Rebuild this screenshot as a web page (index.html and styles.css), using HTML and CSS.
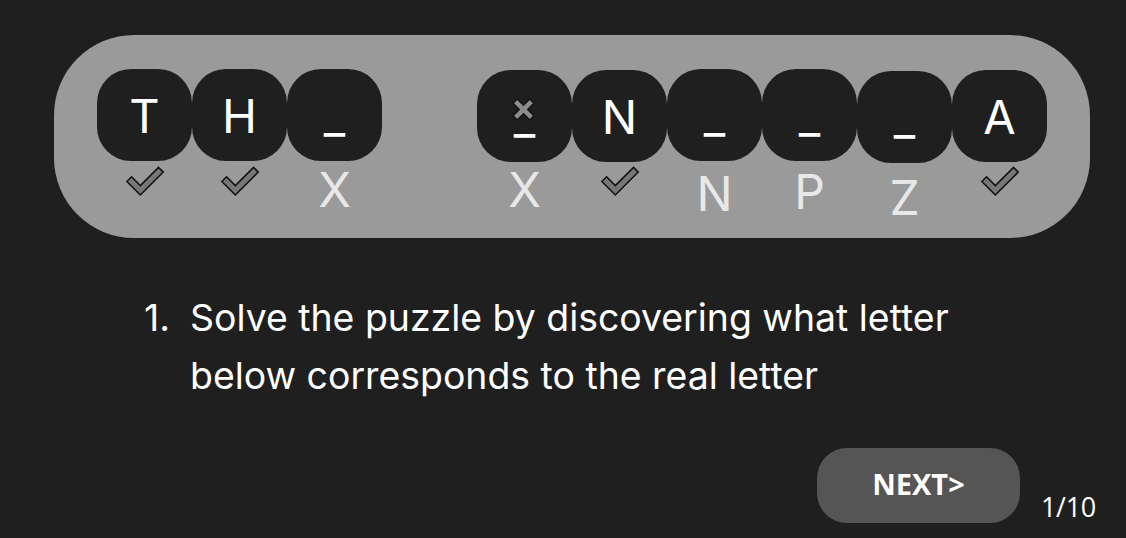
FILE: index.html
```html
<!DOCTYPE html>
<html lang="en">
<head>
<meta charset="utf-8">
<title>Puzzle</title>
<link rel="stylesheet" href="styles.css">
</head>
<body>
<main class="page">
  <section class="board">
    <div class="slot">
      <div class="tile">T</div>
      <div class="hint"><svg class="check" viewBox="-26 8 42 32"><path transform="rotate(45)" d="M0,27 L13,27 L13,0 L20,0 L20,34 L0,34 Z"/></svg></div>
    </div>
    <div class="slot">
      <div class="tile">H</div>
      <div class="hint"><svg class="check" viewBox="-26 8 42 32"><path transform="rotate(45)" d="M0,27 L13,27 L13,0 L20,0 L20,34 L0,34 Z"/></svg></div>
    </div>
    <div class="slot">
      <div class="tile">_</div>
      <div class="hint">X</div>
    </div>
    <div class="slot space"></div>
    <div class="slot">
      <div class="tile low">_<svg class="wrong" viewBox="0 0 24 24"><path d="M2,6 L6,2 L12,8 L18,2 L22,6 L16,12 L22,18 L18,22 L12,16 L6,22 L2,18 L8,12 Z"/></svg></div>
      <div class="hint">X</div>
    </div>
    <div class="slot">
      <div class="tile low">N</div>
      <div class="hint"><svg class="check" viewBox="-26 8 42 32"><path transform="rotate(45)" d="M0,27 L13,27 L13,0 L20,0 L20,34 L0,34 Z"/></svg></div>
    </div>
    <div class="slot">
      <div class="tile">_</div>
      <div class="hint down4">N</div>
    </div>
    <div class="slot">
      <div class="tile">_</div>
      <div class="hint down2">P</div>
    </div>
    <div class="slot">
      <div class="tile lower">_</div>
      <div class="hint down8">Z</div>
    </div>
    <div class="slot">
      <div class="tile low">A</div>
      <div class="hint"><svg class="check" viewBox="-26 8 42 32"><path transform="rotate(45)" d="M0,27 L13,27 L13,0 L20,0 L20,34 L0,34 Z"/></svg></div>
    </div>
  </section>

  <section class="step">
    <span class="num">1.</span>
    <p class="text">Solve the puzzle by discovering what letter below corresponds to the real letter</p>
  </section>

  <footer class="footer">
    <button class="next" type="button">NEXT&gt;</button>
    <span class="count">1/10</span>
  </footer>
</main>
</body>
</html>
```
FILE: styles.css
```css
html, body {
  margin: 0;
  padding: 0;
  background: #1f1f1f;
}

body {
  width: 1126px;
  height: 538px;
  overflow: hidden;
  font-family: "Inter", "Liberation Sans", sans-serif;
  color: #ffffff;
}

.page {
  display: flex;
  flex-direction: column;
}

.board {
  box-sizing: border-box;
  width: 1036px;
  height: 203px;
  margin: 35px 0 0 54px;
  padding: 34px 0 0 0;
  background: #9a9a9a;
  border-radius: 80px;
  display: flex;
  justify-content: center;
  align-items: flex-start;
}

.slot {
  width: 95px;
  display: flex;
  flex-direction: column;
  align-items: center;
}

.tile {
  position: relative;
  box-sizing: border-box;
  width: 95px;
  height: 92px;
  border-radius: 34px;
  background: #1f1f1f;
  color: #ffffff;
  font-size: 47px;
  line-height: 1;
  font-weight: 400;
  display: flex;
  align-items: center;
  justify-content: center;
}

.tile.low { margin-top: 1px; }
.tile.lower { margin-top: 2px; }
.tile.low + .hint { margin-top: 4px; }
.tile.lower + .hint { margin-top: 3px; }

.wrong {
  position: absolute;
  left: 34px;
  top: 27px;
  width: 25px;
  height: 25px;
}

.wrong path {
  fill: #8c8c8c;
  stroke: #111111;
  stroke-width: 1.3;
}

.hint {
  margin-top: 5px;
  height: 48px;
  font-size: 48px;
  line-height: 48px;
  color: #e8e8e8;
  display: flex;
  justify-content: center;
  align-items: flex-start;
}

.hint.down2 { padding-top: 2px; }
.hint.down4 { padding-top: 4px; }
.hint.down8 { padding-top: 8px; }

.check {
  margin-top: 0;
  width: 40px;
  height: 31px;
}

.check path {
  fill: #777777;
  stroke: #111111;
  stroke-width: 1.6;
  stroke-linejoin: miter;
}

.step {
  display: flex;
  align-items: flex-start;
  margin: 51px 0 0 144px;
  font-size: 37.4px;
  line-height: 58px;
}

.num {
  width: 46px;
  flex: none;
}

.text {
  margin: 0;
  width: 800px;
}

.footer {
  display: flex;
  justify-content: flex-end;
  align-items: flex-end;
  margin-top: 43px;
  padding-right: 30px;
}

.next {
  width: 203px;
  height: 75px;
  border: none;
  border-radius: 30px;
  background: #555555;
  color: #ffffff;
  font-family: "Open Sans", "Noto Sans", sans-serif;
  font-weight: 700;
  font-size: 29px;
  line-height: 1;
  padding: 0 0 4px 0;
  cursor: pointer;
}

.count {
  margin: 0 0 3px 21px;
  font-family: "Open Sans", "Noto Sans", sans-serif;
  font-size: 27px;
  letter-spacing: -0.3px;
  line-height: 1;
  color: #ffffff;
}
```
